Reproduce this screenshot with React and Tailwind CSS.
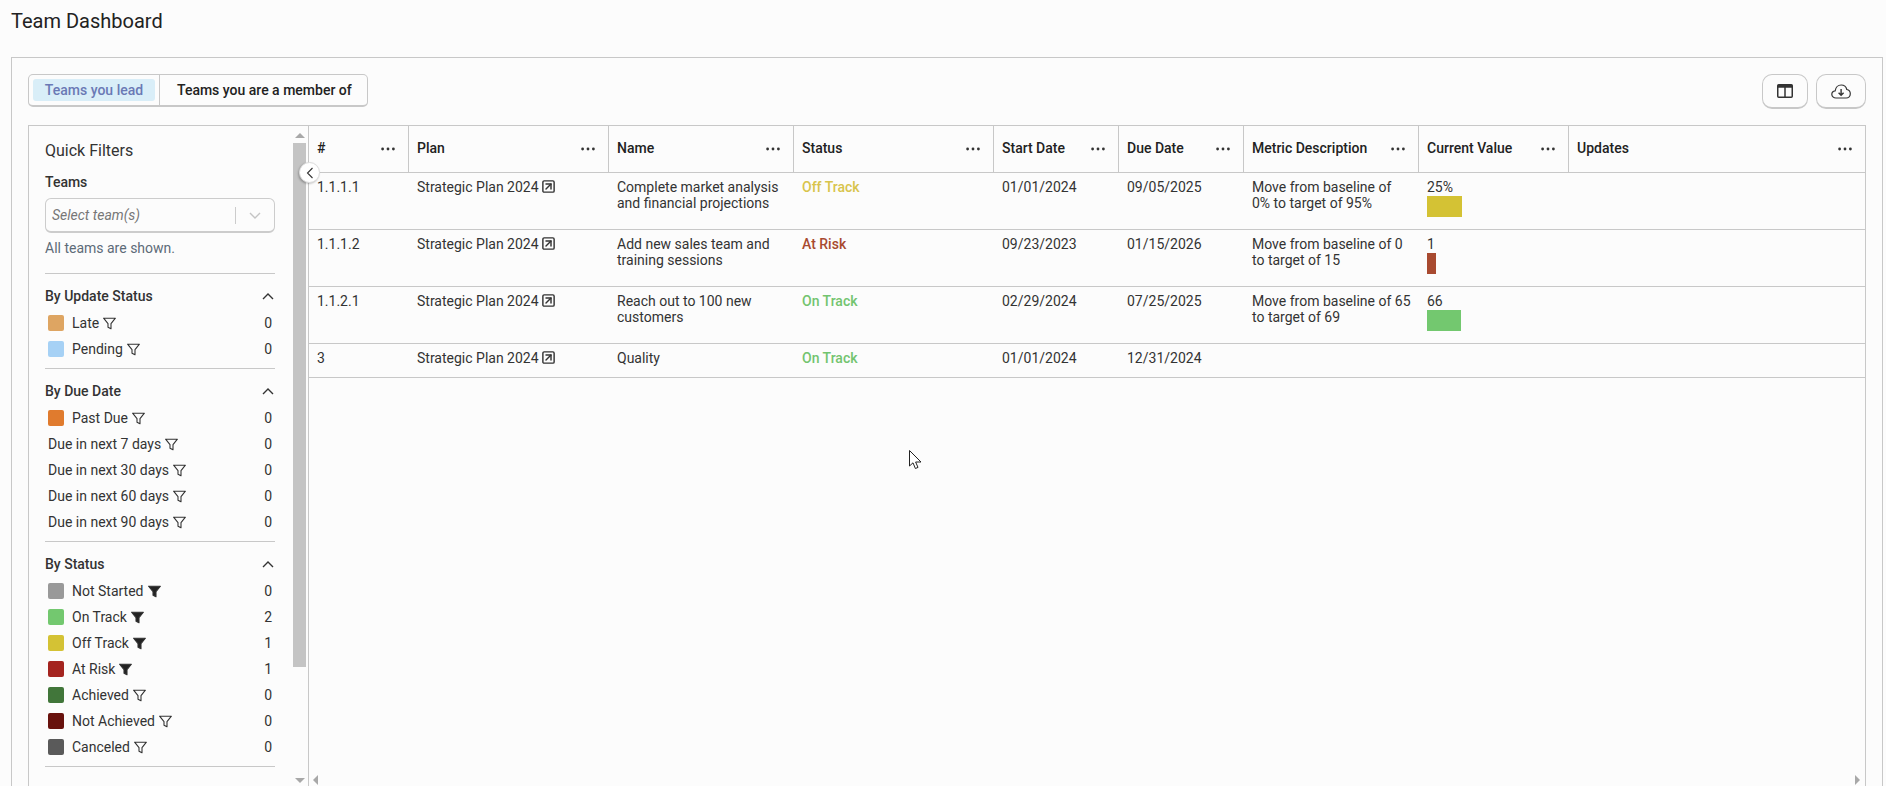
import { SquareArrowUpRight } from "lucide-react";

const columns = [
  { name: "#", width: "w-[100px]" },
  { name: "Plan", width: "w-[200px]" },
  { name: "Name", width: "w-[185px]" },
  { name: "Status", width: "w-[200px]" },
  { name: "Start Date", width: "w-[125px]" },
  { name: "Due Date", width: "w-[125px]" },
  { name: "Metric Description", width: "w-[175px]" },
  { name: "Current Value", width: "w-[150px]" },
  { name: "Updates", width: "flex-1" },
];

const rows = [
  {
    id: "1.1.1.1",
    name: "Complete market analysis and financial projections",
    status: "Off Track",
    statusColor: "text-[#d8c44c]",
    start: "01/01/2024",
    due: "09/05/2025",
    metric: "Move from baseline of 0% to target of 95%",
    value: "25%",
    bar: "w-[35px] bg-[#d4c234]",
    height: "h-[57px]",
  },
  {
    id: "1.1.1.2",
    name: "Add new sales team and training sessions",
    status: "At Risk",
    statusColor: "text-[#a84a30]",
    start: "09/23/2023",
    due: "01/15/2026",
    metric: "Move from baseline of 0 to target of 15",
    value: "1",
    bar: "w-[9px] bg-[#a84a30]",
    height: "h-[57px]",
  },
  {
    id: "1.1.2.1",
    name: "Reach out to 100 new customers",
    status: "On Track",
    statusColor: "text-[#73c46f]",
    start: "02/29/2024",
    due: "07/25/2025",
    metric: "Move from baseline of 65 to target of 69",
    value: "66",
    bar: "w-[34px] bg-[#73c86f]",
    height: "h-[57px]",
  },
  {
    id: "3",
    name: "Quality",
    status: "On Track",
    statusColor: "text-[#73c46f]",
    start: "01/01/2024",
    due: "12/31/2024",
    height: "h-[34px]",
  },
];

const filterGroups = [
  {
    title: "By Update Status",
    items: [
      { label: "Late", color: "bg-[#dea562]", count: 0 },
      { label: "Pending", color: "bg-[#a6d1f5]", count: 0 },
    ],
  },
  {
    title: "By Due Date",
    items: [
      { label: "Past Due", color: "bg-[#e07b2e]", count: 0 },
      { label: "Due in next 7 days", count: 0 },
      { label: "Due in next 30 days", count: 0 },
      { label: "Due in next 60 days", count: 0 },
      { label: "Due in next 90 days", count: 0 },
    ],
  },
  {
    title: "By Status",
    items: [
      { label: "Not Started", color: "bg-[#999999]", count: 0, active: true },
      { label: "On Track", color: "bg-[#73c86f]", count: 2, active: true },
      { label: "Off Track", color: "bg-[#d4c234]", count: 1, active: true },
      { label: "At Risk", color: "bg-[#a4241f]", count: 1, active: true },
      { label: "Achieved", color: "bg-[#41763a]", count: 0 },
      { label: "Not Achieved", color: "bg-[#68120d]", count: 0 },
      { label: "Canceled", color: "bg-[#5a5a5a]", count: 0 },
    ],
  },
];

const FunnelIcon = ({ active }) => (
  <svg width="13" height="13" viewBox="0 0 13 13" className="shrink-0">
    <path
      d="M0.6 1.2H12.4L8 6.6V11.8L5 10.2V6.6Z"
      fill={active ? "#222" : "none"}
      stroke="#333"
      strokeWidth="1.1"
      strokeLinejoin="round"
    />
  </svg>
);

const Chevron = ({ className, points = "1,7 6,2 11,7" }) => (
  <svg width="12" height="9" viewBox="0 0 12 9" className={className}>
    <polyline points={points} fill="none" stroke="currentColor" strokeWidth="1.4" />
  </svg>
);

const Dots = () => (
  <svg width="14" height="4" viewBox="0 0 14 4" className="shrink-0">
    <circle cx="1.6" cy="2" r="1.4" fill="#333" />
    <circle cx="7" cy="2" r="1.4" fill="#333" />
    <circle cx="12.4" cy="2" r="1.4" fill="#333" />
  </svg>
);

const Triangle = ({ points }) => (
  <svg width="10" height="10" viewBox="0 0 10 10">
    <polygon points={points} fill="#a8a8a8" />
  </svg>
);

const FilterGroup = ({ title, items }) => (
  <div className="border-t border-[#c8c8c8] pt-[14px] pb-[6px]">
    <div className="flex items-center justify-between h-4 mb-[6px]">
      <span className="font-medium text-[#333]">{title}</span>
      <Chevron className="mr-px text-[#333]" />
    </div>
    <div className="flex flex-col">
      {items.map((item) => (
        <div key={item.label} className="flex items-center h-[26px] pl-[3px] pr-[3px]">
          {item.color && <span className={`w-4 h-4 rounded-[2px] mr-2 ${item.color}`}></span>}
          <span className="text-[#333]">{item.label}</span>
          <span className="ml-1">
            <FunnelIcon active={item.active} />
          </span>
          <span className="ml-auto text-[#333]">{item.count}</span>
        </div>
      ))}
    </div>
  </div>
);

const Sidebar = () => (
  <aside className="w-[280px] shrink-0 flex border-r border-[#c8c8c8] overflow-hidden">
    <div className="w-[264px] shrink-0 pl-4 pr-[18px] pt-4">
      <h2 className="text-[16px] leading-[18px] text-[#333]">Quick Filters</h2>
      <div className="mt-[14px] font-medium text-[#333] leading-4">Teams</div>
      <div className="mt-2 h-[35px] flex items-center border border-[#ccc] border-b-2 rounded-md pl-[6px]">
        <span className="flex-1 italic text-[#777]">Select team(s)</span>
        <span className="w-px h-[17px] bg-[#ccc]"></span>
        <Chevron className="mx-[13px] text-[#c4c4c4]" points="1,2 6,7 11,2" />
      </div>
      <div className="mt-[7px] mb-[17px] text-[#5d6b78] leading-4">All teams are shown.</div>
      {filterGroups.map((group) => (
        <FilterGroup key={group.title} title={group.title} items={group.items} />
      ))}
      <div className="border-t border-[#c8c8c8] pt-[15px]">
        <div className="font-medium text-[#333] h-4">By Plan</div>
      </div>
    </div>
    <div className="w-[13px] shrink-0 flex flex-col items-center pt-[4px]">
      <Triangle points="0,8 10,8 5,3" />
      <div className="w-[13px] h-[524px] mt-[3px] bg-[#c4c4c4]"></div>
      <div className="mt-auto pb-[1px]">
        <Triangle points="0,3 10,3 5,8" />
      </div>
    </div>
  </aside>
);

const DataTable = () => (
  <div className="flex-1 flex flex-col min-w-0">
    <div className="flex h-[47px] shrink-0 border-b border-[#c8c8c8]">
      {columns.map((col, i) => (
        <div
          key={col.name}
          className={`${col.width} flex items-center justify-between pl-2 pr-[13px] ${
            i < columns.length - 1 ? "border-r border-[#c8c8c8]" : ""
          }`}
        >
          <span className="font-medium text-[#222] -mt-px">{col.name}</span>
          <Dots />
        </div>
      ))}
    </div>

    {rows.map((row) => (
      <div key={row.id} className={`flex shrink-0 border-b border-[#c8c8c8] leading-4 text-[#333] ${row.height}`}>
        <div className="w-[100px] pl-2 pt-[6px]">{row.id}</div>
        <div className="w-[200px] pl-2 pt-[6px] flex items-start gap-[2px]">
          <span>Strategic Plan 2024</span>
          <SquareArrowUpRight size={15} strokeWidth={2.3} className="text-[#333]" />
        </div>
        <div className="w-[185px] pl-2 pr-2 pt-[6px]">{row.name}</div>
        <div className={`w-[200px] pl-2 pt-[6px] font-medium ${row.statusColor}`}>{row.status}</div>
        <div className="w-[125px] pl-2 pt-[6px]">{row.start}</div>
        <div className="w-[125px] pl-2 pt-[6px]">{row.due}</div>
        <div className="w-[175px] pl-2 pr-2 pt-[6px]">{row.metric}</div>
        <div className="w-[150px] pl-2 pt-[6px]">
          {row.value && <div>{row.value}</div>}
          {row.bar && <div className={`h-[21px] mt-[1px] ${row.bar}`}></div>}
        </div>
        <div className="flex-1"></div>
      </div>
    ))}

    <div className="flex-1"></div>
    <div className="flex justify-between pl-[2px] pr-[3px] pb-[1px]">
      <Triangle points="7,0 7,10 2,5" />
      <Triangle points="3,0 3,10 8,5" />
    </div>
  </div>
);

export default function App() {
  return (
    <div
      className="relative h-screen overflow-hidden bg-[#fcfcfc] flex flex-col text-[14px] text-[#333]"
      style={{ fontFamily: "Roboto, sans-serif" }}
    >
      <h1 className="h-[57px] pl-[11px] pt-[8px] text-[20px] leading-[26px] text-[#222] shrink-0">Team Dashboard</h1>

      <div className="flex-1 min-h-0 flex flex-col ml-[11px] mr-[3px] border border-b-0 border-[#c8c8c8] px-4 pt-4">
        <div className="flex justify-between shrink-0 h-[51px]">
          <div className="flex h-[33px] border border-b-2 border-[#c8c8c8] rounded-[5px]">
            <div className="flex items-center pl-1 pr-1 border-r border-[#c8c8c8]">
              <span className="w-[122px] h-[22px] flex items-center justify-center bg-[#d9eef8] rounded-[3px] font-medium text-[#6a79b5]">
                Teams you lead
              </span>
            </div>
            <div className="flex items-center pl-[17px] pr-[15px] font-medium text-[#222]">Teams you are a member of</div>
          </div>
          <div className="flex gap-2">
            <button className="w-[46px] h-[35px] flex items-center justify-center border border-b-2 border-[#c8c8c8] rounded-[10px]">
              <svg width="16" height="14" viewBox="0 0 16 14">
                <rect x="0.75" y="0.75" width="14.5" height="12.5" rx="1" fill="none" stroke="#333" strokeWidth="1.5" />
                <rect x="0.75" y="0.75" width="14.5" height="3" fill="#333" />
                <line x1="8" y1="3" x2="8" y2="13" stroke="#333" strokeWidth="1.5" />
              </svg>
            </button>
            <button className="w-[50px] h-[35px] flex items-center justify-center border border-b-2 border-[#c8c8c8] rounded-[10px]">
              <svg width="20" height="15" viewBox="0 0 20 15" fill="none" stroke="#333" strokeWidth="1.2">
                <path d="M5 14C2.5 14 0.8 12.3 0.8 10.3C0.8 8.4 2.3 7 4.2 6.8C4.6 3.6 7 1 10.2 1C13 1 15.2 2.9 15.8 5.5C17.8 5.8 19.3 7.6 19.3 9.8C19.3 12.2 17.5 14 15.2 14Z" />
                <path d="M10.1 5V11M7.6 8.7L10.1 11.2L12.6 8.7" strokeWidth="1.4" />
              </svg>
            </button>
          </div>
        </div>

        <div className="relative flex-1 min-h-0 flex border border-b-0 border-[#c8c8c8]">
          <Sidebar />
          {/* collapse handle sits over the sidebar edge */}
          <button className="absolute left-[270px] top-[36px] w-[21px] h-[21px] flex items-center justify-center rounded-full bg-white border border-[#ddd] shadow-[-1px_1px_2px_rgba(0,0,0,0.25)] text-[#333]">
            <svg width="8" height="12" viewBox="0 0 8 12">
              <polyline points="6.5,1 1.5,6 6.5,11" fill="none" stroke="currentColor" strokeWidth="1.1" />
            </svg>
          </button>
          <DataTable />
        </div>
      </div>

      {/* screen-capture mouse pointer */}
      <svg width="13" height="20" viewBox="0 0 13 20" className="absolute left-[909px] top-[450px]">
        <path d="M0.5 0.5V16L4 12.8L6.4 18.5L9 17.4L6.6 12H12Z" fill="#fff" stroke="#222" strokeWidth="1" />
      </svg>
    </div>
  );
}
